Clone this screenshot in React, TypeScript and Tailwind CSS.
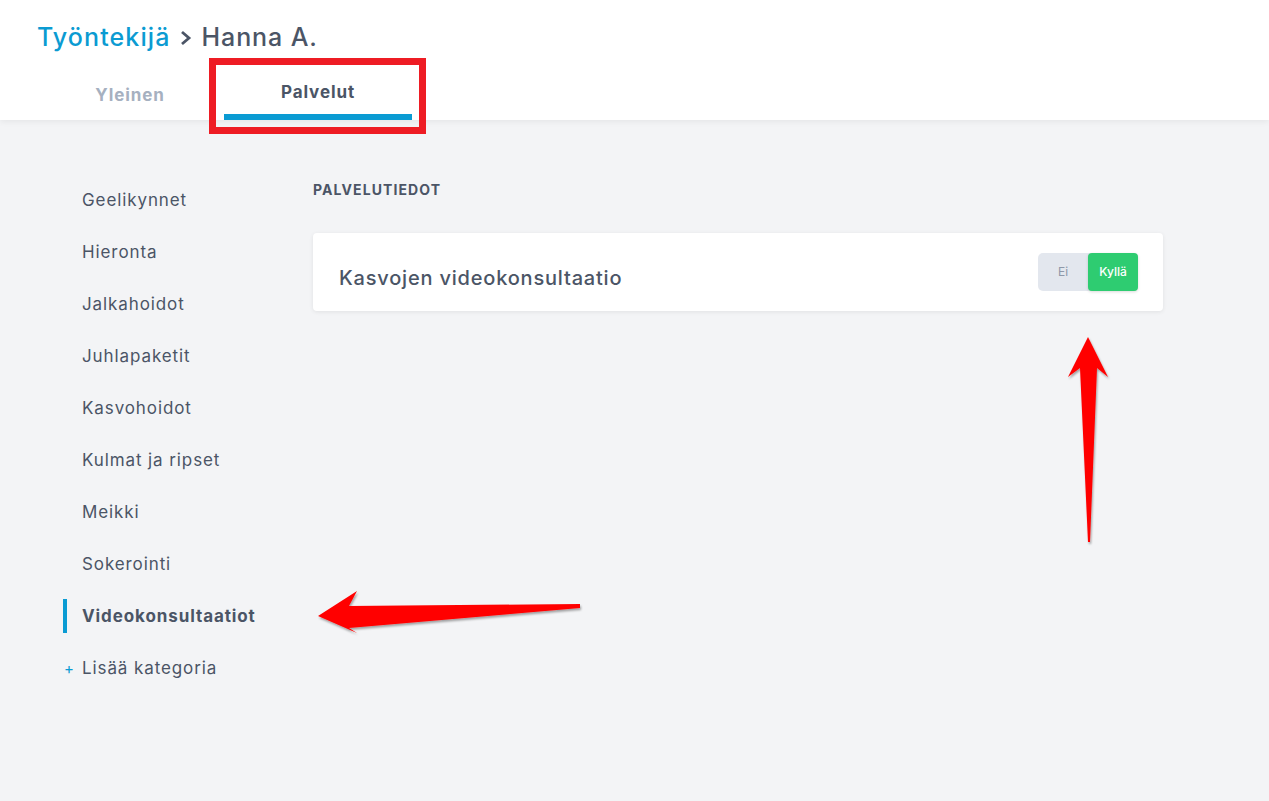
import React from "react";

const items = [
  "Geelikynnet",
  "Hieronta",
  "Jalkahoidot",
  "Juhlapaketit",
  "Kasvohoidot",
  "Kulmat ja ripset",
  "Meikki",
  "Sokerointi",
  "Videokonsultaatiot",
];

export default function App() {
  return (
    <div
      className="relative w-[1269px] h-[801px] overflow-hidden bg-[#f3f4f6]"
      style={{ fontFamily: 'Inter, "Noto Sans", sans-serif' }}
    >
      {/* Header */}
      <div className="relative z-10 h-[120px] bg-white shadow-[0_2px_6px_rgba(0,0,0,0.06)]">
        <div className="pl-[37px] pt-[21px] flex items-center h-[34px] box-content text-[25px] font-medium tracking-[1.1px]">
          <span className="text-[#0b9bd2]">Työntekijä</span>
          <svg width="14" height="16" viewBox="0 0 14 16" className="ml-[8px] mr-[9px]">
            <path d="M3 2 L10 8 L3 14" fill="none" stroke="#4b5566" strokeWidth="2.8" />
          </svg>
          <span className="text-[#4b5566] tracking-[0.9px]">Hanna A.</span>
        </div>
        <div className="flex pl-[36px] mt-[21px]">
          <div className="w-[188px] h-[44px] flex items-center justify-center text-[17px] font-bold text-[#a6b0c0] tracking-[0.9px] pb-[4px]">
            Yleinen
          </div>
          <div className="w-[188px] h-[44px] flex items-center justify-center text-[17px] font-bold text-[#4b5566] border-b-[6px] border-[#0a9bd3] tracking-[0.9px] pb-[4px]">
            Palvelut
          </div>
        </div>
      </div>

      {/* Body */}
      <div className="flex pl-[63px]">
        <div className="w-[250px] pt-[55px]">
          {items.map((it) => {
            const active = it === "Videokonsultaatiot";
            return (
              <div key={it} className="h-[52px] flex items-center relative">
                {active && <div className="absolute left-0 top-[8px] w-[4px] h-[34px] bg-[#0a9bd3]" />}
                <span
                  className={
                    "pl-[19px] text-[17px] tracking-[0.9px] " +
                    (active ? "font-bold text-[#4b5566]" : "text-[#4b5566]")
                  }
                >
                  {it}
                </span>
              </div>
            );
          })}
          <div className="h-[52px] flex items-center text-[17px] text-[#4b5566] tracking-[0.9px]">
            <span className="text-[#0a9bd3] text-[15px] w-[19px] pl-[1px]">+</span>
            <span>Lisää kategoria</span>
          </div>
        </div>

        <div className="pt-[62px] w-[850px]">
          <div className="h-[16px] leading-[16px] text-[14px] font-bold text-[#4b5566] tracking-[1.1px]">
            PALVELUTIEDOT
          </div>
          <div className="mt-[35px] h-[78px] bg-white rounded-[4px] shadow-[0_1px_4px_rgba(0,0,0,0.08)] flex items-center justify-between pl-[26px] pr-[25px]">
            <span className="text-[20px] font-medium text-[#4b5566] pt-[11px] tracking-[0.8px]">Kasvojen videokonsultaatio</span>
            <div className="flex w-[100px] h-[38px] rounded-[5px] bg-[#e3e7ee] text-[12px]">
              <div className="w-[50px] flex items-center justify-center text-[#8e98a8]">Ei</div>
              <div className="w-[50px] flex items-center justify-center bg-[#2ecc71] text-white font-medium rounded-[4px] shadow-[0_1px_3px_rgba(0,0,0,0.15)]">
                Kyllä
              </div>
            </div>
          </div>
        </div>
      </div>

      {/* Annotations */}
      <div className="absolute left-[209px] top-[58px] w-[217px] h-[76px] border-[7px] border-[#ee1c24] z-20" />
      <svg className="absolute left-0 top-0 z-20 pointer-events-none" width="1269" height="801">
        <defs>
          <filter id="sh" x="-20%" y="-20%" width="140%" height="140%">
            <feDropShadow dx="1" dy="2" stdDeviation="1.2" floodColor="#000" floodOpacity="0.35" />
          </filter>
        </defs>
        <polygon
          filter="url(#sh)"
          fill="#ff0000"
          points="1088,337 1108,377 1097,368 1090,542 1088,542 1080,368 1068,377"
        />
        <polygon
          filter="url(#sh)"
          fill="#ff0000"
          points="318,616 357,591 349,606 580,604 580,608 349,628 357,633"
        />
      </svg>
    </div>
  );
}
